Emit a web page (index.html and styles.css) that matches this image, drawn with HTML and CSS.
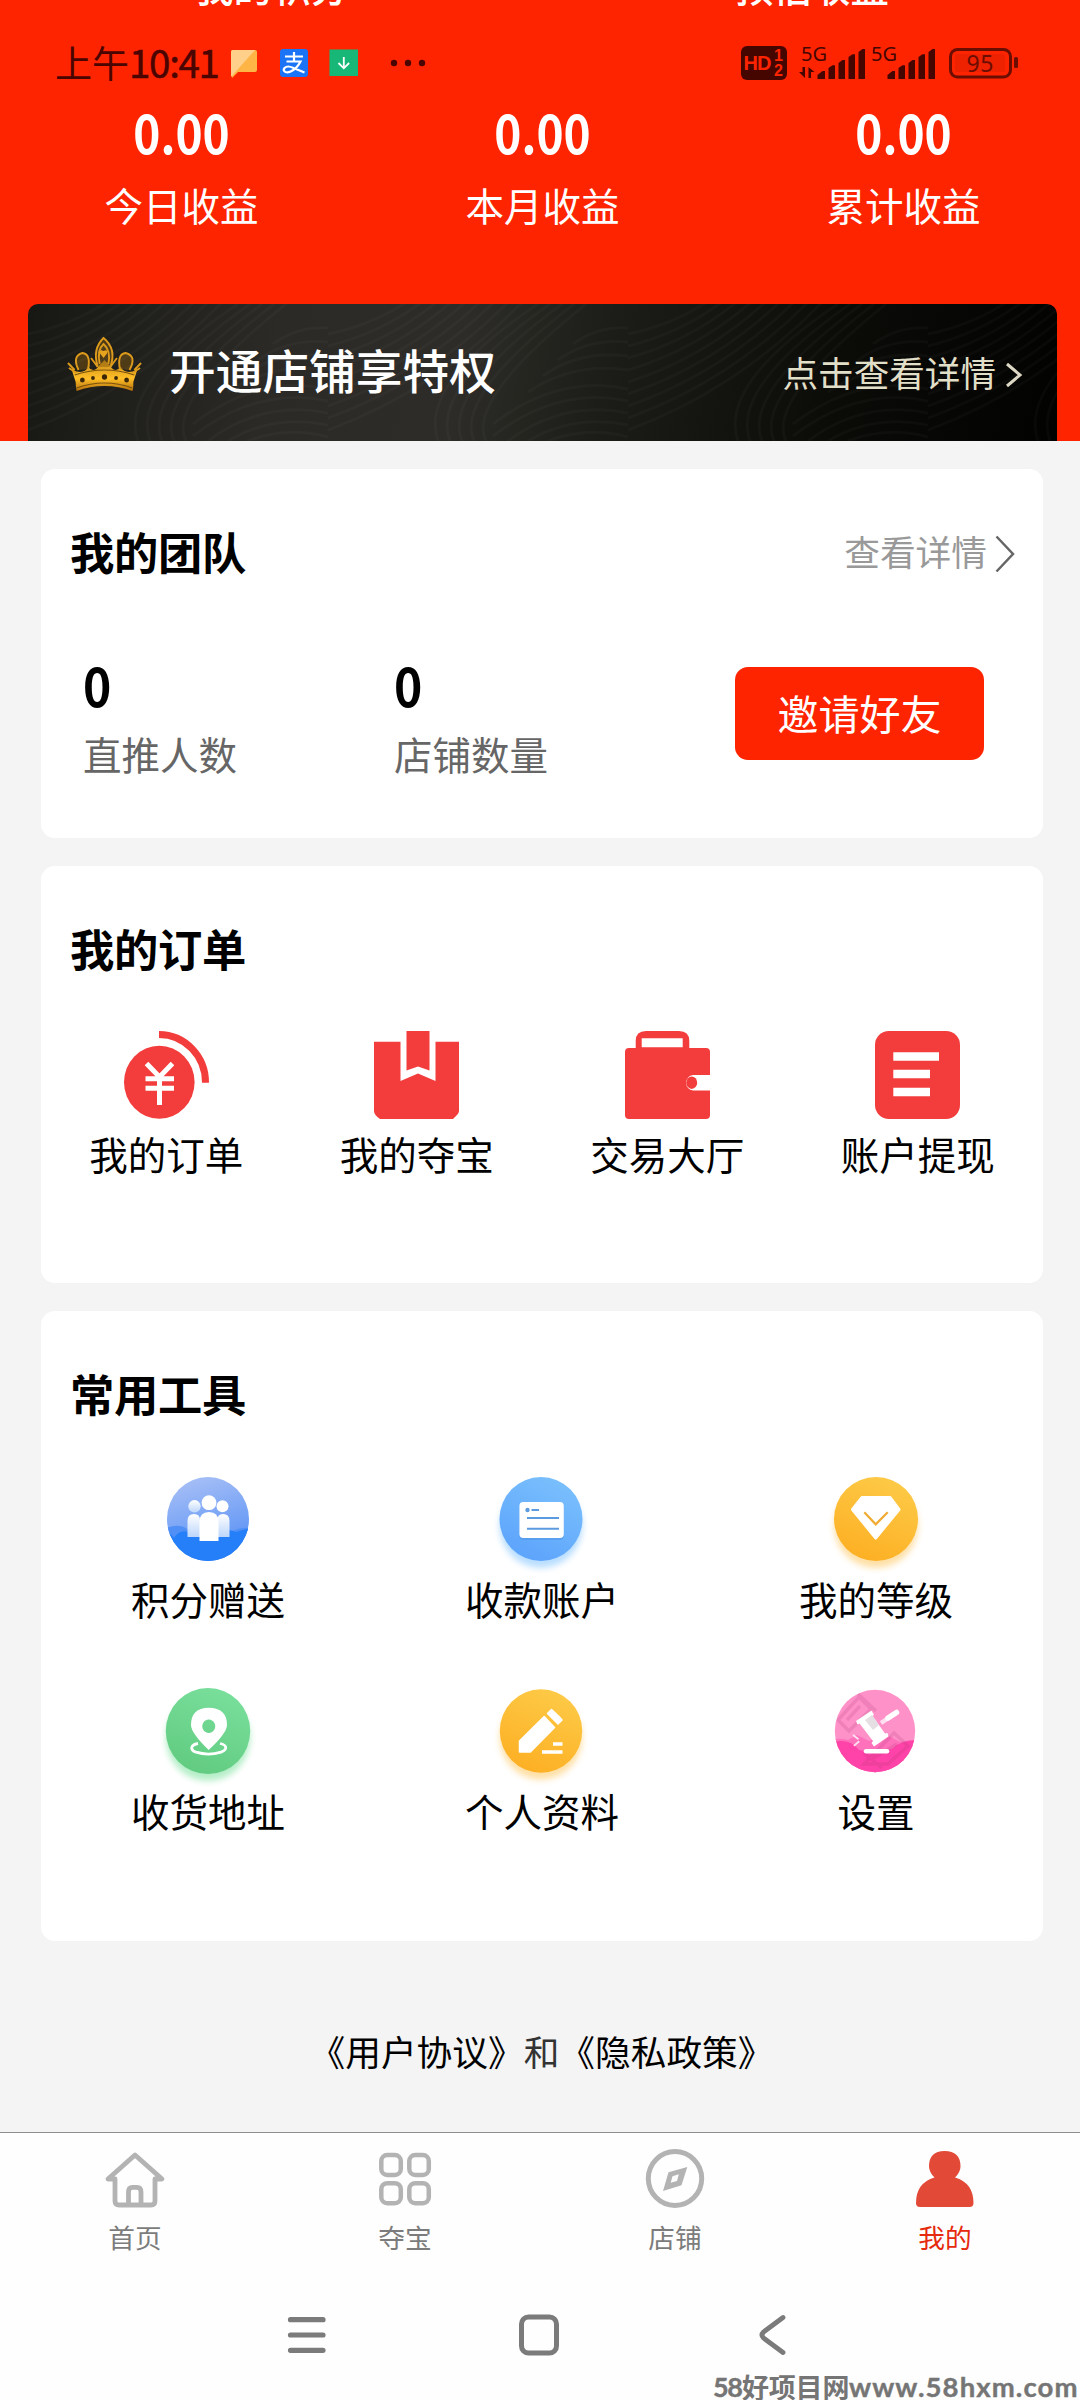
FILE: index.html
```html
<!DOCTYPE html>
<html lang="zh-CN">
<head>
<meta charset="utf-8">
<title>我的</title>
<link rel="stylesheet" href="styles.css">
</head>
<body>
<div class="page">
  <div class="status">
    <span class="status-time">上午<span class="status-clock">10:41</span></span>
    <svg class="status-apps" width="200" height="40" viewBox="225 43 200 40">
      <path d="M231 52q0-2 2-2h22q2 0 2 2v18q0 2-2 2h-17l-6 6z" fill="#ffb545"/>
      <path d="M231 52q0-2 2-2h22l-24 27z" fill="#ffd08a"/>
      <rect x="280" y="49" width="28" height="28" rx="3" fill="#1b74f5"/>
      <path d="M285 56.500h18M294 52v9M286.500 61.500h14q-3 6-8 9-4 2.500-7 1.500-3-1.500-1-4 3-3 9 0l11 4.500" fill="none" stroke="#fff" stroke-width="2.200"/>
      <rect x="329.500" y="49.500" width="28.500" height="26.500" fill="#17b877"/>
      <path d="M343.800 57v11M338.500 63l5.300 5.300 5.300-5.300" fill="none" stroke="#fff" stroke-width="1.800"/>
      <g fill="#4a0500"><circle cx="394" cy="63" r="3.200"/><circle cx="408" cy="63" r="3.200"/><circle cx="422" cy="63" r="3.200"/></g>
    </svg>
    <svg class="status-signals" width="285" height="40" viewBox="738 43 285 40">
      <rect x="741" y="46" width="46" height="34" rx="6" fill="#450600"/>
      <text class="hd" x="743.500" y="70" textLength="28">HD</text>
      <text class="hd-small" x="774" y="61">1</text>
      <text class="hd-small" x="774" y="76">2</text>
      <g fill="#450600">
        <text class="net" x="801" y="61" textLength="26">5G</text>
        <text class="net" x="871" y="61" textLength="26">5G</text>
        <path d="M802.500 67h2.500v11l-6-6h3.500zM808.500 78h2.500v-6h3.500l-6-5z"/>
        <g id="bars">
          <path d="M817.500 79v-4l5-4h2.500v8zM828.500 79v-11l4-2.700h2.500v13.700zM838.500 79v-16l4-3h2.500v19zM848.500 79v-22l4-2.700h2.500v24.700zM858.500 79v-27l4-3h2.500v30z"/>
        </g>
        <use href="#bars" x="70"/>
      </g>
      <rect x="955" y="54" width="50" height="18" rx="2" fill="#ee2100"/>
      <rect x="950.500" y="49.500" width="60" height="27.500" rx="7" fill="none" stroke="#6b0d00" stroke-width="3"/>
      <rect x="1014" y="57" width="4" height="11" rx="1.500" fill="#6b0d00"/>
      <text class="battery" x="966.500" y="72" textLength="27">95</text>
    </svg>
  </div>

  <header class="hero">
    <div class="hero-top"><span>我的积分</span><span>预估收益</span></div>
    <div class="income">
      <div class="income-item"><b class="figure">0.00</b><span>今日收益</span></div>
      <div class="income-item"><b class="figure">0.00</b><span>本月收益</span></div>
      <div class="income-item"><b class="figure">0.00</b><span>累计收益</span></div>
    </div>
    <div class="banner">
      <svg class="banner-lines" width="1029" height="137" preserveAspectRatio="none">
        <defs>
          <pattern id="waves" width="300" height="137" patternUnits="userSpaceOnUse">
            <g fill="none" stroke="#fff" stroke-opacity=".025" stroke-width="2.500">
              <path d="M0 30Q50 20 90-10M0 42Q58 28 104-10M0 54Q66 36 118-10M0 66Q74 44 132-10M0 78Q82 52 146-10M0 90Q90 60 160-10M0 102Q98 68 174-10M0 114Q106 76 188-10M0 126Q114 84 202-10"/>
              <path d="M110 137Q90 80 210 0M122 137Q102 84 222 0M134 137Q114 88 234 0M146 137Q126 92 246 0M158 137Q138 96 258 0"/>
              <path d="M165 120Q230 70 300 85M165 132Q230 82 300 97M180 137Q235 96 300 109M200 137Q245 110 300 121M220 137Q260 122 300 133M200 88Q245 58 300 66M215 72Q250 46 300 52M230 56Q260 34 300 38M245 40Q270 22 300 24"/>
            </g>
          </pattern>
        </defs>
        <rect width="1029" height="137" fill="url(#waves)"/>
      </svg>
      <svg class="crown" width="75" height="58" viewBox="0 0 78 58" preserveAspectRatio="none">
        <defs><linearGradient id="gold" x1="0" y1="0" x2="0" y2="1"><stop offset="0" stop-color="#c98a17"/><stop offset=".6" stop-color="#ffbe25"/><stop offset="1" stop-color="#b06d0b"/></linearGradient></defs>
        <path d="M5 34Q18 39 22 31Q28 38 34 29L39 24L44 29Q50 38 56 31Q60 39 73 34L69 46Q69 54 68 55Q39 45 10 55Q9 49 9 46z" fill="url(#gold)"/>
        <path d="M32 31Q26 13 38 2Q52 13 45 31zM13 34Q5 20 16 17Q25 18 22 33zM65 34Q73 20 61 17Q52 18 55 33z" fill="#8a5f12" fill-opacity=".45"/>
        <g fill="none" stroke="#dc9a1b" stroke-width="2">
          <path d="M32 31Q26 13 38 2Q52 13 45 31M34 28Q31 14 38 8Q46 15 43 28"/>
          <path d="M12 34Q5 20 16 17Q25 18 22 33M65 34Q73 20 61 17Q52 18 55 33M2 32l8 5M76 32l-8 5M1 27l7 7M77 27l-7 7M25 22l7 9M52 22l-7 9"/>
        </g>
        <path d="M38 22l-4-5q0-4 4-2 4-2 4 2z" fill="#e5a31e"/>
        <path d="M8 39Q39 29 70 39M10 52Q39 42 68 52" fill="none" stroke="#79500c" stroke-width="1.200"/>
        <g fill="#3a2606"><circle cx="16" cy="44" r="2.500"/><circle cx="27" cy="42" r="2"/><circle cx="39" cy="41" r="2.700"/><circle cx="51" cy="42" r="2"/><circle cx="62" cy="44" r="2.500"/></g>
      </svg>
      <span class="banner-title">开通店铺享特权</span>
      <span class="banner-more">点击查看详情</span>
      <svg class="banner-arrow" width="18" height="26" viewBox="0 0 18 26"><path d="M2 2l13 11L2 24" fill="none" stroke="#ddd8c4" stroke-width="3"/></svg>
    </div>
  </header>

  <main class="cards">
    <section class="card team">
      <div class="card-head">
        <h2>我的团队</h2>
        <a class="more">查看详情<svg class="more-arrow" width="20" height="38" viewBox="0 0 20 38"><path d="M1.500 1.500L18 19 1.500 36.500" fill="none" stroke="#666" stroke-width="2.500"/></svg></a>
      </div>
      <div class="team-row">
        <div class="team-item"><b class="figure">0</b><span>直推人数</span></div>
        <div class="team-item"><b class="figure">0</b><span>店铺数量</span></div>
        <button class="invite">邀请好友</button>
      </div>
    </section>

    <section class="card orders">
      <div class="card-head"><h2>我的订单</h2></div>
      <div class="order-row">
        <div class="order">
          <svg width="85" height="88" viewBox="0 0 85 88"><ellipse cx="35.300" cy="51.300" rx="35.300" ry="36.500" fill="#f33c3c"/><path d="M35 3.500A46.500 48 0 0 1 81.500 51.800" fill="none" stroke="#f33c3c" stroke-width="7"/><path d="M22.500 32.500L35.500 46 48.500 32.500M35.500 46V74M21.500 47.700H50M21.500 57.300H50" fill="none" stroke="#fff" stroke-width="5"/></svg>
          <span>我的订单</span>
        </div>
        <div class="order">
          <svg width="85" height="88" viewBox="0 0 85 88"><path d="M0 10.700H26.500V50L44 42.500 61.500 50V10.700H85V80q0 2-2 4t-4 4H6Q0 84 0 80z" fill="#f33c3c"/><path d="M32.500 0H55.500V39.500L44 35.500 32.500 39.500z" fill="#f33c3c"/></svg>
          <span>我的夺宝</span>
        </div>
        <div class="order">
          <svg width="85" height="88" viewBox="0 0 85 88"><path d="M10.700 17V10Q10.700 0 21 0H54Q64.300 0 64.300 10V17H81Q85 17 85 21V44H68A7.800 7.800 0 0 0 68 59.500H85V84Q85 88 81 88H4Q0 88 0 84V21Q0 17 4 17zM16.700 7.300V16.300H57.700V7.300z" fill="#f33c3c" fill-rule="evenodd"/><ellipse cx="66.700" cy="51.700" rx="5.500" ry="6.200" fill="#f33c3c"/></svg>
          <span>交易大厅</span>
        </div>
        <div class="order">
          <svg width="85" height="88" viewBox="0 0 85 88"><rect width="85" height="88" rx="14" fill="#f33c3c"/><path d="M18.300 21.300H64v8.500H18.300zM18.300 38.700H55v8.500H18.300zM18.300 56.700H55v8.500H18.300z" fill="#fff"/></svg>
          <span>账户提现</span>
        </div>
      </div>
    </section>

    <section class="card tools">
      <div class="card-head"><h2>常用工具</h2></div>
      <div class="tool-grid">
        <div class="tool">
          <svg width="84" height="84" viewBox="0 0 84 84">
            <defs><linearGradient id="g1" x1=".2" y1="0" x2=".5" y2="1"><stop offset="0" stop-color="#a9c0f6"/><stop offset="1" stop-color="#548ff5"/></linearGradient><clipPath id="c1"><ellipse cx="42" cy="42" rx="41" ry="42"/></clipPath><linearGradient id="fade" x1="0" x2="0" y1="0" y2="1"><stop offset="0" stop-color="#fff"/><stop offset="1" stop-color="#bcd6fb"/></linearGradient></defs>
            <g clip-path="url(#c1)"><rect width="84" height="84" fill="url(#g1)"/><path d="M0 51Q13 46 21 52Q36 45 53 52L65 55Q74 50 84 51V84H0z" fill="#4f8ff6"/><path d="M0 56Q5 56 8 61Q14 51 25 56Q40 63 51 60Q60 50 70 55L84 51V84H0z" fill="#247ff8"/></g>
            <ellipse cx="28.500" cy="29.300" rx="6.200" ry="6.200" fill="url(#fade)"/><circle cx="56.500" cy="29.300" r="6" fill="#fff"/>
            <path d="M21.500 60V44q0-7 6.500-7t6 7v16zM51 60V44q0-7 6-7 6.500 0 6.500 7v16z" fill="url(#fade)"/>
            <path d="M33.500 64V45q0-10 9.500-10t9.500 10v19z" fill="#fff"/><circle cx="43" cy="25.700" r="7.400" fill="#fff"/>
          </svg>
          <span>积分赠送</span>
        </div>
        <div class="tool">
          <svg class="glow-blue" width="84" height="84" viewBox="1 0 84 84"><defs><linearGradient id="g2" x1=".8" y1="0" x2=".3" y2="1"><stop offset="0" stop-color="#7bc1fd"/><stop offset="1" stop-color="#5ca3fc"/></linearGradient></defs><ellipse cx="42" cy="42" rx="41.500" ry="42" fill="url(#g2)"/><rect x="20.400" y="26" width="44.400" height="37" rx="4" fill="#468bdc" opacity=".4"/><rect x="20.400" y="25" width="44.400" height="36" rx="4" fill="#fff"/><circle cx="28.500" cy="33" r="2.200" fill="#5c9be0"/><path d="M32.500 33H40M28 41H60M28 51.700H60" stroke="#5c9be0" stroke-width="2"/></svg>
          <span>收款账户</span>
        </div>
        <div class="tool">
          <svg class="glow-gold" width="84" height="84" viewBox="0 0 84 84"><defs><linearGradient id="g3" x1=".7" y1="0" x2=".3" y2="1"><stop offset="0" stop-color="#fdca47"/><stop offset="1" stop-color="#fdaf23"/></linearGradient></defs><ellipse cx="42" cy="42" rx="42" ry="42" fill="url(#g3)"/><path d="M28 20.500H56L65 32.500 41.700 61 18.500 32.500z" fill="#fff" stroke="#fff" stroke-width="3" stroke-linejoin="round"/><path d="M30.300 35.300L41.700 47.300 53.700 35.300" fill="none" stroke="#f0ab32" stroke-width="2.200"/></svg>
          <span>我的等级</span>
        </div>
        <div class="tool">
          <svg class="glow-green" width="84" height="84" viewBox="0 0 84 84"><defs><linearGradient id="g4" x1=".7" y1="0" x2=".3" y2="1"><stop offset="0" stop-color="#79df9c"/><stop offset="1" stop-color="#61cb80"/></linearGradient></defs><ellipse cx="42" cy="42" rx="42.200" ry="43" fill="url(#g4)"/><path d="M42.700 61Q25 44 25 36Q25 19 42.700 18.700Q61 19 61 36Q61 44 42.700 61zM42.700 30.500a6.500 6.700 0 1 0 .1 0z" fill="#fff" fill-rule="evenodd"/><path d="M32 54.500C24 56 24 61 30 63.200Q42 67 55 63.200C62 60 61 56 54 54.500" fill="none" stroke="#fff" stroke-width="2.800"/></svg>
          <span>收货地址</span>
        </div>
        <div class="tool">
          <svg class="glow-gold" width="84" height="84" viewBox="1 0 84 84"><ellipse cx="42" cy="42" rx="41.200" ry="41.700" fill="url(#g3)"/><path d="M20.500 52L45.200 27.500 55.500 38.500 31.400 63H20.500zM48.500 24.500l4-4q10 9 10.500 10.500l-4 4z" fill="#fff" stroke="#fff" stroke-width="1.500" stroke-linejoin="round"/><path d="M43 63H63.500M54 55H63.500" stroke="#fff" stroke-width="3.500"/></svg>
          <span>个人资料</span>
        </div>
        <div class="tool">
          <svg width="84" height="84" viewBox="1 0 84 84"><defs><clipPath id="c6"><ellipse cx="42" cy="42" rx="40.200" ry="41.200"/></clipPath></defs>
            <g clip-path="url(#c6)"><rect width="84" height="84" fill="#ff91c9"/><path d="M0 50Q9 49 15 51L24 46 36 52 54 46 67 53Q76 51 84 51V84H0z" fill="#ff71bb"/><path d="M0 53Q17 49 26 61Q43 65 59 60Q66 52 84 51V84H0z" fill="#ff43a8"/>
            <g fill="none" stroke="#a73577" stroke-opacity=".18" stroke-width="3.500"><path d="M5 31L26 8 38 20 16 42zM14 31L27 17M31 75L61 44 75 57 55 75zM39 70L64 55M31 64L49 79M24 4L43 22"/></g></g>
            <path d="M23 32L38.500 21.500 41 26 39.500 27 52 44.500 54.500 44 55.500 47.500 41 57.500 38.500 54 40 52 26.500 34.500 24.500 35.500z" fill="#fff"/><path d="M32 31l7-5 7 10-6 5z" fill="#e5dfe3"/>
            <path d="M48 34L63 24" stroke="#ffdff0" stroke-width="4.500"/><path d="M55 29L63.500 23.500" stroke="#fff" stroke-width="5.500" stroke-linecap="round"/><path d="M33 62.300H54" stroke="#fff" stroke-width="4.500" stroke-linecap="round"/><path d="M20 46l7 5.500-8 7" fill="none" stroke="#ffe2f1" stroke-width="1.800" stroke-dasharray="7 3"/></svg>
          <span>设置</span>
        </div>
      </div>
    </section>
  </main>

  <p class="legal"><span>《用户协议》</span><span class="legal-and">和</span><span>《隐私政策》</span></p>

  <footer class="bottom">
    <nav class="tabs">
      <a class="tab"><svg width="60" height="60" viewBox="0 0 60 60"><path d="M10 30H3L30 6 57 30H50V52Q50 56 46 56H14Q10 56 10 52zM23.500 55V43q0-4.700 4-4.700h4.500q4 0 4 4.700v12" fill="none" stroke="#b3b3b3" stroke-width="4.800" stroke-linejoin="round"/></svg><span>首页</span></a>
      <a class="tab"><svg width="60" height="60" viewBox="0 0 60 60"><g fill="none" stroke="#b3b3b3" stroke-width="4.500"><rect x="6.300" y="6" width="19.500" height="20" rx="6"/><rect x="34.300" y="6" width="19.500" height="20" rx="6"/><rect x="6.300" y="34.200" width="19.500" height="20" rx="6"/><rect x="34.300" y="34.200" width="19.500" height="20" rx="6"/></g></svg><span>夺宝</span></a>
      <a class="tab"><svg width="60" height="60" viewBox="0 0 60 60"><ellipse cx="30" cy="29.500" rx="26.700" ry="27" fill="none" stroke="#b3b3b3" stroke-width="5"/><path d="M42.300 18L23.500 23.300 18 42 36.500 36.300zM33.800 25.300L27.500 27.200 25.700 33.700 32 32z" fill="#b3b3b3" fill-rule="evenodd"/></svg><span>店铺</span></a>
      <a class="tab tab-active"><svg width="60" height="60" viewBox="0 0 60 60"><path d="M19.500 28.500Q14 23 14 17.500Q14 2 29.500 2Q45.500 2 45.500 17.500Q45.500 23 40 28.500Q58.500 34 58.500 54Q58.500 58 54.500 58H5Q1 58 1 54Q1 34 19.500 28.500z" fill="#e24936"/></svg><span>我的</span></a>
    </nav>
    <div class="sysnav">
      <svg width="40" height="42" viewBox="0 0 40 42"><path d="M3.500 5.700H36M3.500 21H36M3.500 36.300H36" stroke="#7b7b7b" stroke-width="5.200" stroke-linecap="round"/></svg>
      <svg width="40" height="42" viewBox="0 0 40 42"><rect x="2.500" y="3" width="35" height="36" rx="7" fill="none" stroke="#7b7b7b" stroke-width="5"/></svg>
      <svg width="40" height="42" viewBox="0 0 40 42"><path d="M32 3.500L12.500 18Q9.500 21 12.500 24L32 38.500" fill="none" stroke="#7b7b7b" stroke-width="4.800" stroke-linecap="round"/></svg>
    </div>
    <div class="watermark"><span class="wm-num">58</span><span class="wm-cn">好项目网</span><span class="wm-url">www.58hxm.com</span></div>
  </footer>
</div>
</body>
</html>
```
FILE: styles.css
```css
* { box-sizing: border-box; }
body {
  margin: 0;
  background: #f4f4f4;
  color: #000;
  font-family: "Noto Sans CJK SC", sans-serif;
  font-size: 38.5px;
}
svg { display: block; flex: none; overflow: visible; }
.page {
  position: relative;
  display: flex;
  flex-direction: column;
  width: 1080px;
  height: 2400px;
  overflow: hidden;
}

/* status bar floats over the scrolled page */
.status {
  position: absolute;
  top: 43px;
  left: 0;
  width: 1080px;
  height: 40px;
  padding: 0 57px 0 55px;
  display: flex;
  color: #4a0500;
}
.status-time { width: 170px; font-size: 37px; line-height: 36px; white-space: nowrap; }
.status-clock { font-size: 38.5px; letter-spacing: -1.3px; -webkit-text-stroke: 0.5px #4a0500; }
.status-signals { margin-left: auto; }
.hd { font: 700 20px "Liberation Sans", sans-serif; fill: #ff2400; }
.hd-small { font: 700 16px "Liberation Sans", sans-serif; fill: #ff2400; }
.net { font: 400 20px "Noto Sans", sans-serif; }
.battery { font: 400 23px "Noto Sans", sans-serif; fill: #6b0d00; }

.hero { height: 441px; background: #ff2400; color: #fff; overflow: hidden; padding: 0 23px 0 28px; }
.hero-top {
  display: grid;
  grid-template-columns: 540px 540px;
  margin: -35px -23px 0 -28px;
  height: 40px;
  line-height: 40px;
  font-weight: 500;
  padding-left: 2px;
}
.hero-top span { text-align: center; }
.figure {
  display: block;
  height: 56px;
  line-height: 56px;
  font-size: 46px;
  font-weight: 700;
  transform: scaleY(1.14);
}
.income { display: grid; grid-template-columns: repeat(3, 361px); margin: 98px -23px 0 -28px; padding-left: 1px; }
.income-item { text-align: center; }
.income-item span { display: block; margin-top: 23px; line-height: 44px; }
.banner {
  position: relative;
  display: flex;
  height: 137px;
  margin-top: 78px;
  padding: 0 34px 0 38px;
  border-radius: 10px 10px 0 0;
  background: linear-gradient(100deg, #171714 0%, #2b2a26 24%, #2d2c28 42%, #1c1d18 56%, #0b0b08 78%, #020201 100%);
  overflow: hidden;
}
.banner-lines { position: absolute; left: 0; top: 0; }
.crown { margin: 32px 27px 0 1px; }
.banner-title { font-size: 46.7px; font-weight: 500; line-height: 130px; }
.banner-more { margin-left: auto; color: #e2dfc8; font-size: 35.6px; line-height: 135px; }
.banner-arrow { margin: 58px 0 0 9px; }

.cards { display: flex; flex-direction: column; gap: 28px; padding: 28px 37px 0 41px; }
.card { background: #fff; border-radius: 14px; padding-top: 52px; }
.team { height: 369px; }
.orders { height: 417px; }
.tools { height: 630px; }
.card-head { display: flex; justify-content: space-between; padding: 0 28px 0 29px; height: 60px; line-height: 60px; }
h2 { margin: 0; font-size: 44.3px; font-weight: 700; letter-spacing: -0.3px; }
.more { display: flex; gap: 8px; color: #999; font-size: 35.7px; }
.more-arrow { margin-top: 14px; }
.team-row { display: flex; margin-top: 75px; padding: 0 59px 0 42px; }
.team-item { width: 311px; color: #666; }
.team-item .figure { color: #000; font-size: 48px; transform: scaleY(1.1); }
.team-item span { display: block; margin-top: 19px; line-height: 44px; }
.invite {
  width: 249px;
  height: 93px;
  margin: 11px 0 0 auto;
  padding: 0 0 3px;
  border: 0;
  border-radius: 13px;
  background: #ff2400;
  color: #fff;
  font: 400 41px "Noto Sans CJK SC", sans-serif;
}
.order-row { display: grid; grid-template-columns: repeat(4, 1fr); margin-top: 53px; }
.order { display: flex; flex-direction: column; align-items: center; gap: 12px; line-height: 44px; }
.tool-grid { display: grid; grid-template-columns: repeat(3, 1fr); grid-auto-rows: 212px; margin-top: 54px; }
.tool { display: flex; flex-direction: column; align-items: center; gap: 15px; line-height: 44px; }
.glow-blue { filter: drop-shadow(0 7px 3px #b9deff); }
.glow-gold { filter: drop-shadow(0 7px 3px #ffe0a6); }
.glow-green { filter: drop-shadow(0 7px 3px #b4eec7); }

.legal { margin: 88px 0 0 3px; text-align: center; font-size: 35.7px; line-height: 44px; }
.legal-and { color: #333; }

.bottom { position: relative; margin-top: auto; height: 268px; border-top: 1px solid #8d8d8d; background: #fefefe; }
.tabs { display: grid; grid-template-columns: repeat(4, 1fr); padding-top: 16px; }
.tab { display: flex; flex-direction: column; align-items: center; color: #7c7c7c; font-size: 26.7px; line-height: 36px; gap: 10px; }
.tab-active { color: #e52a0d; }
.sysnav { display: grid; grid-template-columns: 232px 232px 232px; justify-items: center; padding-left: 191px; margin-top: 59px; }
.watermark {
  position: absolute;
  left: 713px;
  bottom: 0;
  display: flex;
  color: #757575;
  line-height: 26px;
  white-space: nowrap;
  font-weight: 700;
}
.wm-num { width: 29px; font-size: 27px; font-family: Lato, sans-serif; letter-spacing: -1.5px; -webkit-text-stroke: 0.4px #757575; }
.wm-cn { width: 107px; font-size: 27px; font-weight: 700; letter-spacing: -0.2px; }
.wm-url { font-size: 27.5px; font-family: Lato, sans-serif; letter-spacing: 1.1px; -webkit-text-stroke: 0.4px #757575; }
```
